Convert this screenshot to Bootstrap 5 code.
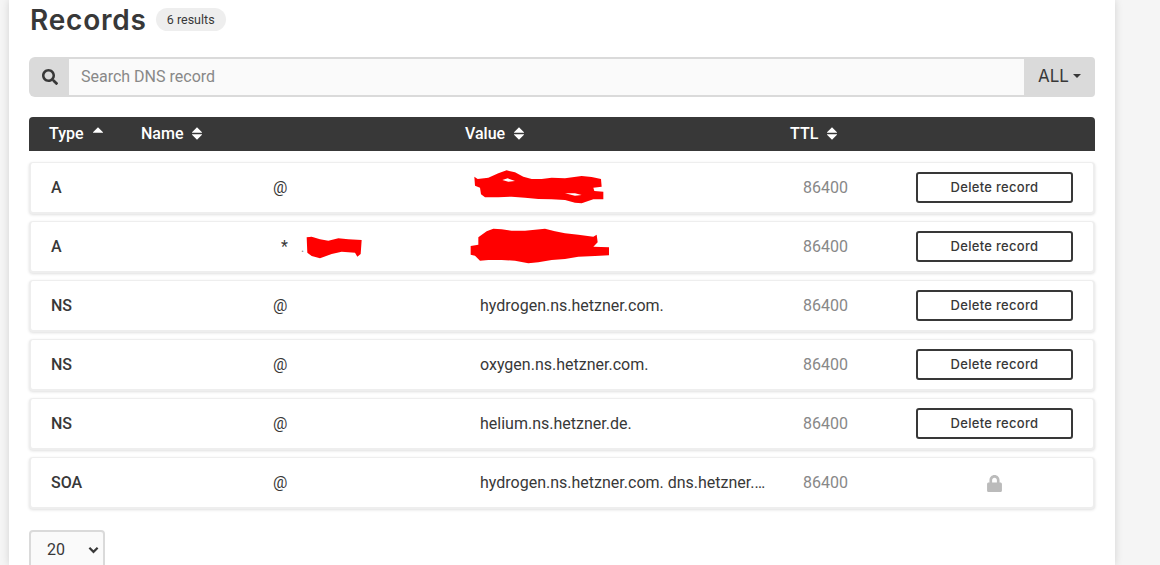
<!DOCTYPE html>
<html lang="en">
  <head>
    <meta charset="UTF-8" />
    <meta name="viewport" content="width=device-width, initial-scale=1.0" />
    <title>Records</title>
    <link
      href="https://cdn.jsdelivr.net/npm/bootstrap@5.3.0/dist/css/bootstrap.min.css"
      rel="stylesheet"
    />
    <style>
      html, body { height: 565px; overflow: hidden; }
      body {
        background: #f5f5f5;
        font-family: Roboto, "Liberation Sans", sans-serif;
        font-size: 16px;
        color: #383838;
      }
      .page-panel {
        width: 1106px;
        height: 565px;
        margin-left: 9px;
        padding: 0 20px;
        background: #fff;
        box-shadow: 0 0 8px rgba(0, 0, 0, 0.14);
      }
      .title-bar { height: 57px; padding-top: 1px; align-items: flex-start; }
      .title-text {
        margin: 0 9px 0 1px;
        font-family: Inter, "Open Sans", sans-serif;
        font-size: 28px;
        font-weight: 600;
        letter-spacing: 0.8px;
        line-height: 38px;
        color: #383838;
      }
      .count-pill {
        margin-top: 7px;
        padding: 0 11px;
        background: #eee;
        color: #383838;
        font-size: 12.5px;
        font-weight: 400;
        line-height: 23px;
      }
      .search-bar { height: 40px; }
      .search-bar .input-group-text,
      .search-bar .all-btn {
        background: #dadada;
        border: 0;
        color: #383838;
      }
      .search-bar .input-group-text { width: 41px; padding: 0; justify-content: center; }
      .search-bar .form-control {
        background: #fafafa;
        border: 0;
        border-top: 2px solid #dadada;
        border-bottom: 2px solid #dadada;
        padding: 0 12px;
        font-size: 16px;
        box-shadow: none;
      }
      .search-bar .form-control::placeholder { color: #888; }
      .search-bar .all-btn {
        width: 71px;
        padding: 0;
        font-family: Inter, "Open Sans", sans-serif;
        font-size: 17px;
        border-radius: 0 4px 4px 0;
      }
      .search-bar .all-btn::after {
        margin-left: 4px;
        border-top-width: 4px;
        border-left-width: 4px;
        border-right-width: 4px;
      }
      .head-row {
        height: 34px;
        margin: 20px 0 11px;
        padding-left: 20px;
        background: #383838;
        color: #fff;
        font-weight: 500;
        border-radius: 4px 4px 0 0;
      }
      .head-row svg {
        width: 10px;
        height: 13px;
        margin-left: 9px;
        vertical-align: -1px;
        fill: #fff;
      }
      .head-type { width: 92px; }
      .head-name { width: 324px; }
      .head-value { width: 325px; }
      .rec-row {
        flex-direction: row;
        align-items: center;
        height: 52px;
        margin-bottom: 7px;
        padding-left: 20px;
        border: 2px solid #eee;
        border-top-width: 1px;
        border-radius: 4px;
        box-shadow: 0 1px 3px rgba(0, 0, 0, 0.13);
        color: #383838;
      }
      .cell-type { width: 222px; font-weight: 500; }
      .cell-name { width: 207px; }
      .cell-name .star { margin-left: 8px; }
      .cell-value { width: 323px; position: relative; }
      .cell-value span { display: block; width: 287px; }
      .cell-ttl { width: 113px; color: #888; }
      .cell-action { width: 157px; text-align: center; }
      .del-btn {
        width: 157px;
        height: 31px;
        padding: 1px 0 0;
        border: 2px solid #383838;
        border-radius: 3px;
        font-family: Inter, "Open Sans", sans-serif;
        font-size: 13px;
        font-weight: 500;
        letter-spacing: 0.3px;
        color: #383838;
      }
      .redact { position: absolute; fill: #f00; fill-rule: evenodd; }
      .redact-val { left: -15px; top: -23px; }
      .redact-name { left: -3px; top: -5px; }
      .cell-name-inner { position: relative; }
      .dot { color: #888; font-size: 12px; margin-left: 13px; }
      .size-select {
        width: 76px;
        height: 40px;
        margin-top: 21px;
        padding: 5px 12px 5px 16px;
        background-color: #fafafa;
        background-image: url("data:image/svg+xml,%3csvg xmlns='http://www.w3.org/2000/svg' viewBox='0 0 12 8'%3e%3cpath fill='none' stroke='%23383838' stroke-width='2.4' d='M1.5 1.5 6 6l4.5-4.5'/%3e%3c/svg%3e");
        background-position: right 4px center;
        background-size: 11px 8px;
        border: 2px solid #dadada;
        border-radius: 4px;
        color: #383838;
        font-size: 16px;
      }
      .lock-icon { fill: #bbb; }
    </style>
  </head>
  <body>
    <div class="page-panel">
      <div class="title-bar d-flex">
        <h1 class="title-text">Records</h1>
        <span class="badge rounded-pill count-pill">6 results</span>
      </div>

      <div class="input-group search-bar">
        <span class="input-group-text">
          <svg width="16" height="16" viewBox="0 0 512 512" fill="#383838"><path d="M505 442.7L405.3 343c-4.5-4.5-10.6-7-17-7H372c27.6-35.3 44-79.7 44-128C416 93.1 322.9 0 208 0S0 93.1 0 208s93.1 208 208 208c48.3 0 92.7-16.4 128-44v16.3c0 6.4 2.5 12.5 7 17l99.7 99.7c9.4 9.4 24.6 9.4 33.9 0l28.3-28.3c9.4-9.4 9.4-24.6.1-34zM208 336c-70.7 0-128-57.2-128-128 0-70.7 57.2-128 128-128 70.7 0 128 57.2 128 128 0 70.7-57.2 128-128 128z"/></svg>
        </span>
        <input class="form-control" type="text" placeholder="Search DNS record" />
        <button class="btn all-btn dropdown-toggle" type="button">ALL</button>
      </div>

      <div class="head-row d-flex align-items-center">
        <div class="head-type">Type<svg viewBox="0 0 11 14"><path d="M5.5 0 11 5.5a.5.5 0 0 1-.4.8H.4a.5.5 0 0 1-.4-.8z"/></svg></div>
        <div class="head-name">Name<svg viewBox="0 0 11 14"><path d="M5.5 0 11 5.5a.5.5 0 0 1-.4.8H.4a.5.5 0 0 1-.4-.8zM5.5 14 0 8.5a.5.5 0 0 1 .4-.8h10.2a.5.5 0 0 1 .4.8z"/></svg></div>
        <div class="head-value">Value<svg viewBox="0 0 11 14"><path d="M5.5 0 11 5.5a.5.5 0 0 1-.4.8H.4a.5.5 0 0 1-.4-.8zM5.5 14 0 8.5a.5.5 0 0 1 .4-.8h10.2a.5.5 0 0 1 .4.8z"/></svg></div>
        <div>TTL<svg viewBox="0 0 11 14"><path d="M5.5 0 11 5.5a.5.5 0 0 1-.4.8H.4a.5.5 0 0 1-.4-.8zM5.5 14 0 8.5a.5.5 0 0 1 .4-.8h10.2a.5.5 0 0 1 .4.8z"/></svg></div>
      </div>

      <div id="records"></div>

      <select class="form-select size-select">
        <option>20</option>
        <option>50</option>
        <option>100</option>
      </select>
    </div>

    <script>
      // the red scribbles hide part of the data, traced from the picture
      const blobA = `<svg class="redact redact-val" width="150" height="44" viewBox="0 0 450 132"><path d="M28 35 38 42 70 38 100 25 125 16 150 22 175 35 200 42 230 42 260 38 300 40 350 33 380 36 408 42 410 65 385 68 388 78 415 80 415 103 385 103 350 115 330 113 300 105 260 103 220 102 180 98 140 95 100 97 60 97 48 88 45 68 30 62ZM112 45 128 40 150 48 130 50ZM300 85 330 85 350 90 330 92Z"/></svg>`;
      const blobB = `<svg class="redact redact-val" width="150" height="44" viewBox="0 0 450 132"><path d="M40 40 65 22 85 14 110 16 140 20 180 20 240 14 270 22 300 28 340 32 385 38 395 32 398 55 385 68 432 70 432 94 390 96 340 98 300 105 260 108 220 115 190 118 150 110 110 108 70 108 45 110 30 95 17 92 17 66 40 62Z"/></svg>`;
      const blobC = `<svg class="redact redact-name" width="100" height="35" viewBox="0 0 300 105"><path d="M110 22 125 20 150 28 175 32 205 25 235 28 275 30 272 72 262 80 255 68 215 65 185 72 150 85 125 78 112 68Z"/></svg>`;

      const records = [
        { type: "A", name: "@", value: blobA },
        { type: "A", name: "wild", value: blobB },
        { type: "NS", name: "@", value: "hydrogen.ns.hetzner.com." },
        { type: "NS", name: "@", value: "oxygen.ns.hetzner.com." },
        { type: "NS", name: "@", value: "helium.ns.hetzner.de." },
        { type: "SOA", name: "@", value: "hydrogen.ns.hetzner.com. dns.hetzner.com. 2021", locked: true },
      ];

      const lock = `<svg class="lock-icon" width="15" height="17" viewBox="0 0 448 512"><path d="M400 224h-24v-72C376 68.2 307.8 0 224 0S72 68.2 72 152v72H48c-26.5 0-48 21.5-48 48v192c0 26.5 21.5 48 48 48h352c26.5 0 48-21.5 48-48V272c0-26.5-21.5-48-48-48zm-104 0H152v-72c0-39.7 32.3-72 72-72s72 32.3 72 72v72z"/></svg>`;

      const container = document.getElementById("records");
      records.forEach((r) => {
        const row = document.createElement("div");
        row.className = "card rec-row";
        const name =
          r.name === "wild"
            ? `<span class="star">*</span><span class="dot">.</span>${blobC}`
            : r.name;
        const value = r.value.startsWith("<svg")
          ? r.value
          : `<span class="text-truncate">${r.value}</span>`;
        row.innerHTML = `
          <div class="cell-type">${r.type}</div>
          <div class="cell-name"><div class="cell-name-inner">${name}</div></div>
          <div class="cell-value">${value}</div>
          <div class="cell-ttl">86400</div>
          <div class="cell-action">${
            r.locked ? lock : `<button class="btn del-btn" type="button">Delete record</button>`
          }</div>`;
        container.appendChild(row);
      });
    </script>
    <script src="https://cdn.jsdelivr.net/npm/bootstrap@5.3.0/dist/js/bootstrap.bundle.min.js"></script>
  </body>
</html>
